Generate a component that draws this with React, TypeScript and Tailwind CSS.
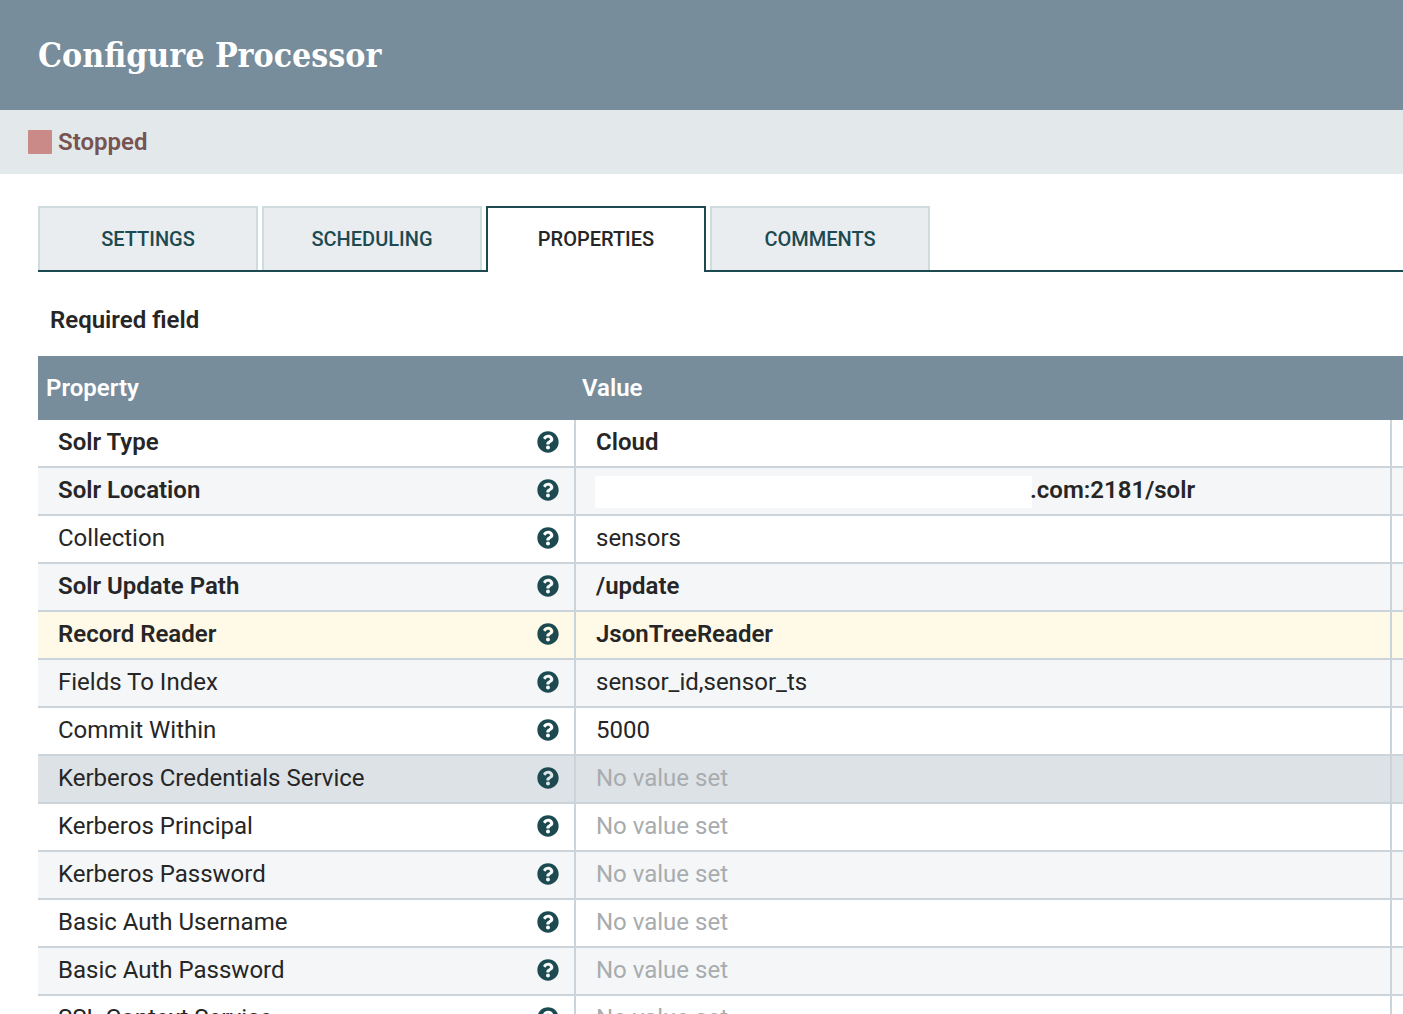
import React from 'react';
import { FaQuestionCircle } from 'react-icons/fa';

const tabs = ['SETTINGS', 'SCHEDULING', 'PROPERTIES', 'COMMENTS'];

const rows = [
  { name: 'Solr Type', value: 'Cloud', bold: true, bg: 'bg-white' },
  { name: 'Solr Location', value: '.com:2181/solr', bold: true, bg: 'bg-[#f4f6f8]', masked: true },
  { name: 'Collection', value: 'sensors', bg: 'bg-white' },
  { name: 'Solr Update Path', value: '/update', bold: true, bg: 'bg-[#f4f6f8]' },
  { name: 'Record Reader', value: 'JsonTreeReader', bold: true, bg: 'bg-[#fffae8]' },
  { name: 'Fields To Index', value: 'sensor_id,sensor_ts', bg: 'bg-[#f4f6f8]' },
  { name: 'Commit Within', value: '5000', bg: 'bg-white' },
  { name: 'Kerberos Credentials Service', bg: 'bg-[#dde2e6]' },
  { name: 'Kerberos Principal', bg: 'bg-white' },
  { name: 'Kerberos Password', bg: 'bg-[#f4f6f8]' },
  { name: 'Basic Auth Username', bg: 'bg-white' },
  { name: 'Basic Auth Password', bg: 'bg-[#f4f6f8]' },
  { name: 'SSL Context Service', bg: 'bg-white' },
];

const App: React.FC = () => {
  return (
    <div className="h-[1014px] w-[1403px] overflow-hidden bg-white font-['Roboto',sans-serif] text-[#262626]">
      {/* Header */}
      <div className="flex h-[110px] items-center bg-[#778d9b] pl-[38px]">
        <h1 className="font-['DejaVu_Serif',serif] text-[33.6px] font-bold text-white [font-stretch:condensed]">
          Configure Processor
        </h1>
      </div>

      {/* Run status */}
      <div className="flex h-[64px] items-center gap-[6px] bg-[#e3e8eb] pl-[28px]">
        <div className="h-6 w-6 rounded-[1px] bg-[#c98a88]"></div>
        <span className="text-[24px] leading-none font-semibold text-[#775351]">Stopped</span>
      </div>

      {/* Tabs */}
      <div className="mt-8 ml-[38px] flex h-[66px] gap-1 border-b-2 border-[#1c4a50]">
        {tabs.map((tab) =>
          tab === 'PROPERTIES' ? (
            <div
              key={tab}
              className="-mb-[2px] flex h-[66px] w-[220px] items-center justify-center border-2 border-b-0 border-[#1c4a50] bg-white pb-[2px] text-[20px] font-medium text-[#262626]"
            >
              {tab}
            </div>
          ) : (
            <div
              key={tab}
              className="flex h-[64px] w-[220px] items-center justify-center border-2 border-b-0 border-[#cfdcdd] bg-[#e9edf0] text-[20px] font-medium text-[#1c4a50]"
            >
              {tab}
            </div>
          ),
        )}
      </div>

      <div className="mt-[34px] ml-[50px] text-[24px] leading-[28px] font-semibold">Required field</div>

      {/* Property table */}
      <div className="mt-[22px] ml-[38px]">
        <div className="flex h-16 items-center bg-[#778d9b] text-[24px] font-semibold text-white">
          <div className="w-[544px] pl-2">Property</div>
          <div>Value</div>
        </div>
        {rows.map((row) => (
          <div key={row.name} className={`flex h-12 border-b-2 border-[#cad4da] text-[24px] ${row.bg}`}>
            <div className={`flex w-[536px] items-center justify-between pr-[15px] pl-5 ${row.bold ? 'font-semibold' : ''}`}>
              <span className="mb-[2px]">{row.name}</span>
              <FaQuestionCircle className="mb-[3px] h-[22px] w-[22px] text-[#1c4a50]" />
            </div>
            <div className="flex w-[818px] items-center border-x-2 border-[#cad4da] pl-5">
              {row.masked && <div className="mt-[2px] -mr-[2px] -ml-[1px] h-8 w-[437px] bg-white"></div>}
              {row.value ? (
                <span className={`mb-[2px] ${row.bold ? 'font-semibold' : ''}`}>{row.value}</span>
              ) : (
                <span className="mb-[2px] text-[#a8acae]">No value set</span>
              )}
            </div>
          </div>
        ))}
      </div>
    </div>
  );
};

export default App;
